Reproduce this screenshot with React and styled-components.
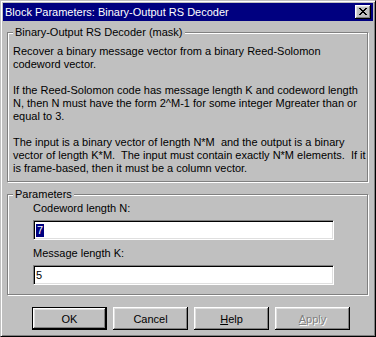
import React from 'react'
import styled, { createGlobalStyle } from 'styled-components'

const GlobalStyle = createGlobalStyle`
  html, body {
    margin: 0;
    padding: 0;
    background: #c0c0c0;
  }
  body {
    font-family: "Liberation Sans", Arial, sans-serif;
    font-size: 11px;
    color: #000;
  }
`

const Window = styled.div`
  width: 376px;
  height: 337px;
  box-sizing: border-box;
  background: #c0c0c0;
  border: 1px solid;
  border-color: #c0c0c0 #000 #000 #c0c0c0;
  box-shadow: inset 1px 1px #fff, inset -1px -1px #808080;
  padding: 2px;
  display: flex;
  flex-direction: column;
`

const TitleBar = styled.div`
  height: 18px;
  background: #000080;
  color: #fff;
  display: flex;
  align-items: center;
  justify-content: space-between;
  padding: 0 2px 0 2px;
  font-size: 11px;
`

const Caption = styled.span`
  white-space: nowrap;
`

const CloseButton = styled.div`
  width: 16px;
  height: 14px;
  box-sizing: border-box;
  background: #c0c0c0;
  box-shadow: inset -1px -1px #000, inset 1px 1px #fff, inset -2px -2px #808080, inset 2px 2px #dfdfdf;
  display: flex;
  align-items: center;
  justify-content: center;
  padding-bottom: 1px;
`

const Body = styled.div`
  flex: 1;
  padding: 4px 5px 0 4px;
  display: flex;
  flex-direction: column;
`

const GroupBox = styled.fieldset`
  margin: ${({ top }) => top}px 0 0 0;
  padding: ${({ pad }) => pad};
  border: 1px solid #808080;
  box-shadow: inset 1px 1px #fff, 1px 1px #fff;
  min-width: 0;
`

const Legend = styled.legend`
  padding: 0 2px;
  line-height: 13px;
  background: #c0c0c0;
`

const Description = styled.p`
  margin: 0 0 13px 0;
  line-height: 13px;
  white-space: nowrap;
  &:last-child {
    margin-bottom: 0;
  }
`

const Field = styled.div`
  padding-left: 20px;
  display: flex;
  flex-direction: column;
`

const Label = styled.div`
  line-height: 13px;
  margin: ${({ top }) => top}px 0 5px 0;
`

const Edit = styled.div`
  width: 301px;
  height: 20px;
  box-sizing: border-box;
  background: #fff;
  border: 1px solid;
  border-color: #808080 #fff #fff #808080;
  box-shadow: inset 1px 1px #000, inset -1px -1px #dfdfdf;
  padding: 0 2px;
  display: flex;
  align-items: center;
  line-height: 13px;
`

const Selected = styled.span`
  background: #000080;
  color: #fff;
  padding: 0 1px;
`

const ButtonRow = styled.div`
  display: flex;
  gap: 6px;
  padding-left: 25px;
  margin-top: 12px;
`

const Button = styled.div`
  width: 75px;
  height: 23px;
  box-sizing: border-box;
  background: #c0c0c0;
  display: flex;
  align-items: center;
  justify-content: center;
  border: ${({ primary }) => (primary ? '1px solid #000' : 'none')};
  box-shadow: inset -1px -1px #000, inset 1px 1px #fff, inset -2px -2px #808080, inset 2px 2px #dfdfdf;
  color: ${({ disabled }) => (disabled ? '#808080' : '#000')};
  text-shadow: ${({ disabled }) => (disabled ? '1px 1px 0 #fff' : 'none')};
`

const CloseGlyph = () => (
  <svg width="8" height="7" viewBox="0 0 8 7" shapeRendering="crispEdges">
    <path
      fill="#000"
      d="M0 0h2v1H0zM6 0h2v1H6zM1 1h2v1H1zM5 1h2v1H5zM2 2h4v1H2zM3 3h2v1H3zM2 4h4v1H2zM1 5h2v1H1zM5 5h2v1H5zM0 6h2v1H0zM6 6h2v1H6z"
    />
  </svg>
)

const App = () => (
  <>
    <GlobalStyle />
    <Window>
      <TitleBar>
        <Caption>Block Parameters: Binary-Output RS Decoder</Caption>
        <CloseButton>
          <CloseGlyph />
        </CloseButton>
      </TitleBar>
      <Body>
        <GroupBox top={1} pad="6px 5px 6px 5px">
          <Legend>Binary-Output RS Decoder (mask)</Legend>
          <Description>
            Recover a binary message vector from a binary Reed-Solomon
            <br />
            codeword vector.
          </Description>
          <Description>
            If the Reed-Solomon code has message length K and codeword length
            <br />
            N, then N must have the form 2^M-1 for some integer Mgreater than or
            <br />
            equal to 3.
          </Description>
          <Description>
            The input is a binary vector of length N*M&nbsp; and the output is a binary
            <br />
            vector of length K*M.&nbsp; The input must contain exactly N*M elements.&nbsp; If it
            <br />
            is frame-based, then it must be a column vector.
          </Description>
        </GroupBox>
        <GroupBox top={6} pad="0 5px 9px 5px">
          <Legend>Parameters</Legend>
          <Field>
            <Label top={1}>Codeword length N:</Label>
            <Edit>
              <Selected>7</Selected>
            </Edit>
            <Label top={7}>Message length K:</Label>
            <Edit>5</Edit>
          </Field>
        </GroupBox>
        <ButtonRow>
          <Button primary>OK</Button>
          <Button>Cancel</Button>
          <Button>
            <span>
              <u>H</u>elp
            </span>
          </Button>
          <Button disabled>
            <span>
              <u>A</u>pply
            </span>
          </Button>
        </ButtonRow>
      </Body>
    </Window>
  </>
)

export default App
